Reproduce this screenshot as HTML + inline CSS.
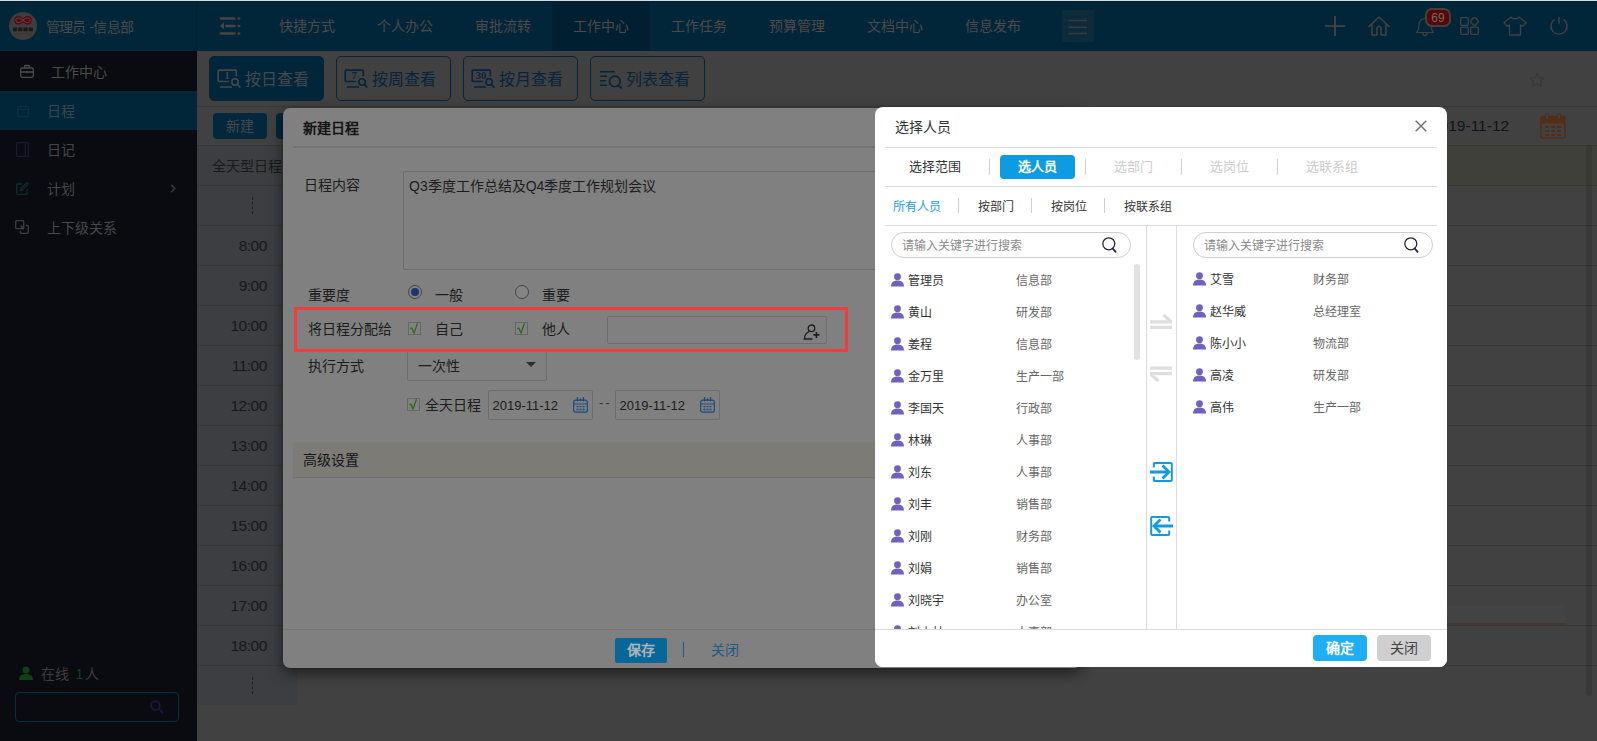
<!DOCTYPE html>
<html lang="zh-CN">
<head>
<meta charset="utf-8">
<title>新建日程 - 选择人员</title>
<style>
*{box-sizing:border-box;margin:0;padding:0}
html,body{width:1597px;height:741px;overflow:hidden;background:#414141}
body{position:relative;font-family:"Liberation Sans",sans-serif;font-size:14px;color:#1c1c1c}
.abs{position:absolute}
.t{position:absolute;white-space:nowrap;line-height:20px;height:20px}
svg{position:absolute;overflow:visible}
/* top bar */
#top{left:0;top:0;width:1597px;height:51px;background:#01263a}
#top .tab{position:absolute;top:0;height:51px;width:98px;text-align:center;line-height:52px;font-size:14px;color:#4d4a49}
#top .tab.on{background:#001f31}
/* sidebar */
#side{left:0;top:51px;width:197px;height:690px;background:#0a0b10}
#side .it{position:absolute;left:0;width:197px;height:39px;line-height:41px;font-size:14px;color:#45474b}
/* main */
#main{left:197px;top:51px;width:1400px;height:690px;background:#414141}
.vbtn{position:absolute;top:56px;width:115px;height:45px;border:1px solid #04253b;border-radius:5px;font-size:16px;color:#05253b;line-height:43px}
.vbtn span{position:absolute;left:35px;top:1px}
.vbtn.on{background:#01263a;border-color:#01263a;color:#46494c}
.hl{position:absolute;height:1px;background:#373737}
.time{position:absolute;left:197px;width:69.8px;text-align:right;font-size:15.5px;letter-spacing:-0.5px;line-height:20px;color:#181818}
/* dialog 1 */
#d1{left:283px;top:108px;width:798px;height:560px;background:#808080;border-radius:7px;box-shadow:0 5px 14px rgba(0,0,0,.55)}
.lab{position:absolute;font-size:14px;line-height:20px;white-space:nowrap;color:#1c1c1c}
.inp{position:absolute;border:1px solid #6d6d6d;border-radius:2px}
.cb{position:absolute;width:13px;height:13px;border:1px solid #666;background:#828282}
/* dialog 2 */
#d2{left:875px;top:107px;width:572px;height:560px;background:#fff;border-radius:8px;overflow:hidden}
#d2 .ln{position:absolute;left:10px;width:552px;height:1px;background:#dcdcdc}
#d2 .sep{position:absolute;width:1px;background:#cfcfcf}
#d2 .row{position:absolute;height:32px;line-height:32px;font-size:12px;white-space:nowrap}
#d2 .row .n{position:absolute;left:17px;color:#333}
#d2 .row .d{position:absolute;left:125px;color:#666}
#d2 .row svg{left:0;top:8px}
.search{position:absolute;height:26px;width:240px;border:1px solid #cfcfcf;border-radius:13px;font-size:12px;color:#8a8a8a;line-height:26px;padding-left:10px;white-space:nowrap}
</style>
</head>
<body>
<!-- MAIN BACKGROUND -->
<div id="main" class="abs"></div>
<!-- view buttons -->
<div class="vbtn on" style="left:209px"><svg width="24" height="20" viewBox="0 0 24 20" style="left:7px;top:11px" fill="none" stroke="currentColor" stroke-width="1.6"><path d="M19.3 8.3V3.1a1 1 0 0 0-1-1H2.2a1 1 0 0 0-1 1v9.4a1 1 0 0 0 1 1H12M3 19h12"/><text x="10" y="11.2" font-family="Liberation Serif,serif" font-weight="bold" font-size="10.5" text-anchor="middle" fill="currentColor" stroke="none">1</text><circle cx="18" cy="13.9" r="3.2" stroke-width="1.6"/><path d="M20.3 16.3l3.1 3.5" stroke-width="1.6"/></svg><span>按日查看</span></div>
<div class="vbtn" style="left:336px"><svg width="24" height="20" viewBox="0 0 24 20" style="left:7px;top:11px" fill="none" stroke="currentColor" stroke-width="1.6"><path d="M19.3 8.3V3.1a1 1 0 0 0-1-1H2.2a1 1 0 0 0-1 1v9.4a1 1 0 0 0 1 1H12M3 19h12"/><text x="10" y="11.2" font-family="Liberation Serif,serif" font-weight="bold" font-size="10.5" text-anchor="middle" fill="currentColor" stroke="none">7</text><circle cx="18" cy="13.9" r="3.2" stroke-width="1.6"/><path d="M20.3 16.3l3.1 3.5" stroke-width="1.6"/></svg><span>按周查看</span></div>
<div class="vbtn" style="left:463px"><svg width="24" height="20" viewBox="0 0 24 20" style="left:7px;top:11px" fill="none" stroke="currentColor" stroke-width="1.6"><path d="M19.3 8.3V3.1a1 1 0 0 0-1-1H2.2a1 1 0 0 0-1 1v9.4a1 1 0 0 0 1 1H12M3 19h12"/><text x="10" y="11.2" font-family="Liberation Serif,serif" font-weight="bold" font-size="10.5" text-anchor="middle" fill="currentColor" stroke="none">30</text><circle cx="18" cy="13.9" r="3.2" stroke-width="1.6"/><path d="M20.3 16.3l3.1 3.5" stroke-width="1.6"/></svg><span>按月查看</span></div>
<div class="vbtn" style="left:590px"><svg width="24" height="20" viewBox="0 0 24 20" style="left:7px;top:11px" fill="none" stroke="currentColor" stroke-width="1.6"><path d="M2 3.7h14.8M2 8.2h7M2 12.7h5.8M2 17.3h7"/><circle cx="16.8" cy="13.4" r="5.3" stroke-width="1.6"/><path d="M20.6 17.3l3.2 3.1" stroke-width="1.7"/></svg><span>列表查看</span></div>
<div class="hl" style="left:197px;top:106px;width:1400px;background:#393939"></div>
<div class="abs" style="left:213px;top:113px;width:54px;height:26px;border-radius:4px;background:#01283c;color:#48494b;font-size:14px;line-height:26px;text-align:center">新建</div>
<div class="abs" style="left:276px;top:113px;width:54px;height:26px;border-radius:4px;background:#01283c"></div>
<div class="t" style="left:1431px;top:116.3px;font-size:15.5px;color:#10131c">2019-11-12</div>
<!-- star -->
<svg width="16" height="16" viewBox="0 0 16 16" style="left:1529px;top:72px" fill="none" stroke="#33393d" stroke-width="1.1" stroke-linejoin="round"><path d="M8 1.3l2 4.5 4.8.5-3.6 3.2 1 4.7L8 11.8l-4.2 2.4 1-4.7L1.2 6.3 6 5.8z"/></svg>
<!-- big calendar icon -->
<svg width="26" height="26" viewBox="0 0 26 26" style="left:1540px;top:113px"><rect x="1" y="3.5" width="24" height="21.5" rx="2" fill="none" stroke="#542d15" stroke-width="1.6"/><rect x="1" y="3.5" width="24" height="7" fill="#542d15"/><rect x="5.5" y="0.5" width="3" height="6" rx="1.5" fill="#414141" stroke="#542d15" stroke-width="1"/><rect x="17.5" y="0.5" width="3" height="6" rx="1.5" fill="#414141" stroke="#542d15" stroke-width="1"/><g fill="#542d15"><rect x="5" y="13" width="4" height="2"/><rect x="11" y="13" width="4" height="2"/><rect x="17" y="13" width="4" height="2"/><rect x="5" y="17" width="4" height="2"/><rect x="11" y="17" width="4" height="2"/><rect x="17" y="17" width="4" height="2"/><rect x="5" y="21" width="4" height="2"/><rect x="11" y="21" width="4" height="2"/><rect x="17" y="21" width="4" height="2"/></g></svg>
<!-- all-day row -->
<div class="abs" style="left:197px;top:145px;width:1400px;height:41px;background:#3f403a"></div>
<div class="abs" style="left:197px;top:145px;width:100px;height:560px;background:#3c3e41"></div>
<div class="t" style="left:212px;top:156px;font-size:14px;color:#1a1a1a">全天型日程</div>
<div class="hl" style="left:197px;top:145px;width:1400px"></div>
<div class="hl" style="left:197px;top:185px;width:1400px"></div>
<div class="hl" style="left:197px;top:225px;width:1400px"></div>
<div class="hl" style="left:197px;top:265px;width:1400px"></div>
<div class="hl" style="left:197px;top:305px;width:1400px"></div>
<div class="hl" style="left:197px;top:345px;width:1400px"></div>
<div class="hl" style="left:197px;top:385px;width:1400px"></div>
<div class="hl" style="left:197px;top:425px;width:1400px"></div>
<div class="hl" style="left:197px;top:465px;width:1400px"></div>
<div class="hl" style="left:197px;top:505px;width:1400px"></div>
<div class="hl" style="left:197px;top:545px;width:1400px"></div>
<div class="hl" style="left:197px;top:585px;width:1400px"></div>
<div class="hl" style="left:197px;top:625px;width:1400px"></div>
<div class="hl" style="left:197px;top:665px;width:1400px"></div>
<div class="hl" style="left:197px;top:665px;width:1400px"></div>
<div class="time" style="top:235.5px">8:00</div>
<div class="time" style="top:275.5px">9:00</div>
<div class="time" style="top:315.5px">10:00</div>
<div class="time" style="top:355.5px">11:00</div>
<div class="time" style="top:395.5px">12:00</div>
<div class="time" style="top:435.5px">13:00</div>
<div class="time" style="top:475.5px">14:00</div>
<div class="time" style="top:515.5px">15:00</div>
<div class="time" style="top:555.5px">16:00</div>
<div class="time" style="top:595.5px">17:00</div>
<div class="time" style="top:635.5px">18:00</div>
<div class="abs" style="left:251.5px;top:197px;width:0;height:17px;border-left:1.5px dashed #26221a"></div>
<div class="abs" style="left:251.5px;top:677px;width:0;height:17px;border-left:1.5px dashed #26221a"></div>
<!-- current time line -->
<div class="abs" style="left:1081px;top:605px;width:485px;height:18px;background:#434343"></div>
<div class="abs" style="left:1081px;top:623px;width:485px;height:2.3px;background:#44392c"></div>
<!-- page scrollbar -->
<div class="abs" style="left:1586px;top:145px;width:6px;height:551px;border-radius:3px;background:rgba(0,0,0,.11)"></div>
<!-- TOPBAR -->
<div id="top" class="abs">
<!-- logo -->
<div class="abs" style="left:9px;top:12px;width:28px;height:28px;border-radius:14px;background:#3f3d3c;overflow:hidden">
<svg width="28" height="28" viewBox="0 0 28 28" style="left:0;top:0"><path d="M14 6.2c-1.7-1.6-3.5-2.2-5-2.2-2.5 0-3.8 1.9-3.8 4.3s1.3 4.3 3.8 4.3c1.5 0 3.3-.6 5-2.2 1.7 1.6 3.5 2.2 5 2.2 2.5 0 3.8-1.9 3.8-4.3S21.5 4 19 4c-1.5 0-3.3.6-5 2.2z" fill="#5a0911"/><path d="M14 8.3c-1.5-1.6-3-2.3-4.6-2.3-1.6 0-2.5 1-2.5 2.3s.9 2.3 2.5 2.3c1.6 0 3.1-.7 4.6-2.3zm0 0c1.5-1.6 3-2.3 4.6-2.3 1.6 0 2.5 1 2.5 2.3s-.9 2.3-2.5 2.3c-1.6 0-3.1-.7-4.6-2.3z" fill="none" stroke="#57504e" stroke-width="1"/><path d="M4 15.5h4.2v3.8H4zM9.2 15.5h4.2v3.8H9.2zM14.5 15.5h4.2v3.8h-4.2zM19.7 15.5h4.2v3.8h-4.2z" fill="#1d1919"/><rect x="4.5" y="21.3" width="19" height=".9" fill="#393737"/></svg>
</div>
<div class="t" style="left:45.7px;top:17px;font-size:14px;color:#4a4a4b;letter-spacing:-0.6px">管理员 -信息部</div>
<div class="abs" style="left:196px;top:2px;width:1px;height:49px;background:#01202f"></div>
<!-- collapse icon -->
<svg width="24" height="20" viewBox="0 0 24 20" style="left:218px;top:16px" fill="none" stroke="#484442" stroke-width="2.5" stroke-linecap="round"><path d="M2.8 2.4h13.7M8.3 10h8.2M2.8 17.5h13.7"/><path d="M20.7 2.4h.5M20.7 10h.5M20.7 17.5h.5"/><path d="M6 6.6L1.7 10 6 13.3z" fill="#484442" stroke="none"/></svg>
<div class="tab" style="left:258px">快捷方式</div>
<div class="tab" style="left:356px">个人办公</div>
<div class="tab" style="left:454px">审批流转</div>
<div class="tab on" style="left:552px">工作中心</div>
<div class="tab" style="left:650px">工作任务</div>
<div class="tab" style="left:748px">预算管理</div>
<div class="tab" style="left:846px">文档中心</div>
<div class="tab" style="left:944px">信息发布</div>
<!-- more box -->
<div class="abs" style="left:1062px;top:10px;width:32px;height:32px;background:#0d2c3b"></div>
<svg width="20" height="16" viewBox="0 0 20 16" style="left:1068px;top:18.7px" stroke="#3b3a39" stroke-width="1.5" fill="none"><path d="M.7 1.5h18.3M.7 8.3h18.3M.7 14.6h18.3"/></svg>
<!-- plus -->
<svg width="20" height="20" viewBox="0 0 20 20" style="left:1325px;top:16px" stroke="#4d4744" stroke-width="1.7" fill="none"><path d="M10 0v20M0 10h20"/></svg>
<!-- home -->
<svg width="22" height="20" viewBox="0 0 22 20" style="left:1368px;top:15.7px" stroke="#454341" stroke-width="1.5" fill="none" stroke-linejoin="round" stroke-linecap="round"><path d="M1 10.5L11 1l10 9.5M4 8.5v10.5h5v-6.5a2 2 0 0 1 4 0v6.5h5V8.5"/></svg>
<!-- bell -->
<svg width="20" height="22" viewBox="0 0 20 22" style="left:1415px;top:15px" stroke="#40403f" stroke-width="1.2" fill="none" stroke-linejoin="round" stroke-linecap="round"><path d="M1.5 17.5c2-2 2.5-4 2.5-8a6 6 0 0 1 12 0c0 4 .5 6 2.5 8zM8 18.5a2 2 0 0 0 4 0"/></svg>
<div class="abs" style="left:1425px;top:8px;width:26px;height:19px;border:2px solid #44403e;border-radius:7px;background:#58060a;color:#75695f;font-size:12px;line-height:16px;text-align:center">69</div>
<!-- grid -->
<svg width="20" height="18" viewBox="0 0 20 18" style="left:1460px;top:17px" stroke="#424242" stroke-width="1.3" fill="none" stroke-linejoin="round"><rect x=".7" y=".7" width="7.6" height="7.6" rx="1"/><rect x=".7" y="10.2" width="7.6" height="7.1" rx="1"/><rect x="10.7" y="10.2" width="7.6" height="7.1" rx="1"/><rect x="11.3" y="1.3" width="6.4" height="6.4" rx="1.8" transform="rotate(45 14.5 4.5)"/></svg>
<!-- shirt -->
<svg width="24" height="20" viewBox="0 0 24 20" style="left:1502.5px;top:16px" stroke="#434240" stroke-width="1.3" fill="none" stroke-linejoin="round"><path d="M8 1L1 6.5l3.2 3.8L6.5 9v10h11V9l2.3 1.3L23 6.5 16 1c-.8 2.3-7.2 2.3-8 0z"/></svg>
<!-- power -->
<svg width="20" height="18" viewBox="0 0 20 18" style="left:1549px;top:17px" stroke="#434240" stroke-width="1.4" fill="none" stroke-linecap="butt"><path d="M10 0v6.8M5.5 2.3a8.1 8.1 0 1 0 9 0"/></svg>
<div class="abs" style="left:0;top:0;width:1597px;height:1px;background:#d9dcde"></div><div class="abs" style="left:0;top:1px;width:1597px;height:1px;background:#001b2c"></div>
</div>
<!-- SIDEBAR -->
<div id="side" class="abs">
<div class="it" style="top:0;height:40px;line-height:42px;color:#4a4b4d"><span class="abs" style="left:51px">工作中心</span>
<svg width="14" height="13" viewBox="0 0 14 13" style="left:20px;top:14px" fill="none" stroke="#4a4b4d" stroke-width="1.3"><rect x=".7" y="3" width="12.6" height="9.3" rx="1.5"/><path d="M4.5 3V1.5a1 1 0 0 1 1-1h3a1 1 0 0 1 1 1V3M.7 7h12.6M7 6v2"/></svg></div>
<div class="it" style="top:40px;background:#01263a;color:#3b434b"><span class="abs" style="left:47px">日程</span>
<svg width="12" height="12" viewBox="0 0 12 12" style="left:17px;top:14px" fill="none" stroke="#0c2f44" stroke-width="1.2"><rect x=".6" y="1.5" width="10.8" height="10" rx="1"/><path d="M.6 4.5h10.8M3.5 0v3M8.5 0v3"/></svg></div>
<div class="it" style="top:79px"><span class="abs" style="left:47px">日记</span>
<svg width="13" height="15" viewBox="0 0 13 15" style="left:16px;top:12px" fill="none" stroke="#191934" stroke-width="1.2"><rect x=".6" y=".6" width="11.8" height="13.8" rx="1"/><path d="M9.3.6v13.8"/></svg></div>
<div class="it" style="top:118px"><span class="abs" style="left:47px">计划</span>
<svg width="13" height="13" viewBox="0 0 13 13" style="left:16px;top:13px" fill="none" stroke="#0b2c33" stroke-width="1.3"><path d="M11 7v4.3a1 1 0 0 1-1 1H1.7a1 1 0 0 1-1-1V3a1 1 0 0 1 1-1H6M4.5 8.5l1.8-.4 6-6-1.4-1.4-6 6z"/></svg>
<svg width="6" height="9" viewBox="0 0 6 9" style="left:170px;top:15px" fill="none" stroke="#3c3e42" stroke-width="1.4"><path d="M1 .7l3.8 3.8L1 8.3"/></svg></div>
<div class="it" style="top:157px"><span class="abs" style="left:47px">上下级关系</span>
<svg width="14" height="14" viewBox="0 0 14 14" style="left:15px;top:12px" fill="none" stroke="#3c3e42" stroke-width="1.3"><rect x=".7" y=".7" width="8" height="8" rx="1"/><path d="M11 5.3h1.3a1 1 0 0 1 1 1v6a1 1 0 0 1-1 1h-6a1 1 0 0 1-1-1V11M5.5 5.5l3 3M8.5 6v2.5H6"/></svg></div>
<!-- online -->
<svg width="14" height="14" viewBox="0 0 14 14" style="left:19px;top:615px" fill="#0d4212"><circle cx="7" cy="4" r="3.5"/><path d="M0 14c0-4 2.5-6 7-6s7 2 7 6z"/></svg>
<div class="t" style="left:41px;top:613px;font-size:14px;color:#3b3d40">在线 <span style="color:#0d4212;margin-left:2.5px;margin-right:1.5px">1</span>人</div>
<div class="abs" style="left:15px;top:641px;width:164px;height:30px;border:1px solid #082e42;border-radius:4px"></div>
<svg width="14" height="14" viewBox="0 0 14 14" style="left:150px;top:649px" fill="none" stroke="#1b163a" stroke-width="1.8"><circle cx="5.5" cy="5.5" r="4.3"/><path d="M8.7 8.7l4.3 4.3"/></svg>
</div>
<!-- DIALOG1 -->
<div id="d1" class="abs">
<div class="lab" style="left:20px;top:9.5px;font-weight:bold;color:#141414">新建日程</div>
<div class="abs" style="left:10px;top:38px;width:788px;height:2px;background:#737373"></div>
<div class="lab" style="left:21px;top:66.5px">日程内容</div>
<div class="inp" style="left:120px;top:63px;width:560px;height:99px"></div>
<div class="lab" style="left:126px;top:67.5px">Q3季度工作总结及Q4季度工作规划会议</div>
<div class="lab" style="left:25px;top:177px">重要度</div>
<div class="abs" style="left:125px;top:177px;width:14px;height:14px;border-radius:7px;border:1px solid #454545;background:#848484"></div>
<div class="abs" style="left:128px;top:180px;width:8px;height:8px;border-radius:4px;background:#1c3475"></div>
<div class="lab" style="left:152px;top:177px">一般</div>
<div class="abs" style="left:232px;top:177px;width:14px;height:14px;border-radius:7px;border:1px solid #454545;background:#848484"></div>
<div class="lab" style="left:259px;top:177px">重要</div>
<div class="lab" style="left:25px;top:210.5px">将日程分配给</div>
<div class="cb" style="left:125px;top:214px"><svg width="11" height="11" viewBox="0 0 11 11" style="left:0;top:0" fill="none" stroke="#2c6a12" stroke-width="1.3"><path d="M1.3 5.6l1.5-.5 2.2 5L8.5.3"/></svg></div>
<div class="lab" style="left:152px;top:210.5px">自己</div>
<div class="cb" style="left:232px;top:214px"><svg width="11" height="11" viewBox="0 0 11 11" style="left:0;top:0" fill="none" stroke="#2c6a12" stroke-width="1.3"><path d="M1.3 5.6l1.5-.5 2.2 5L8.5.3"/></svg></div>
<div class="lab" style="left:259px;top:210.5px">他人</div>
<div class="inp" style="left:324px;top:208px;width:220px;height:28px"></div>
<svg width="17" height="17" viewBox="0 0 17 17" style="left:520px;top:214.5px" fill="none" stroke="#1c1c1c" stroke-width="1.3"><circle cx="8.5" cy="5.3" r="3.3"/><path d="M9.5 16H1.3c.3-3.6 2-6.2 4.7-7.4"/><path d="M10.4 11.9h6M13.4 8.9v6" stroke-width="1.6"/></svg>
<div class="lab" style="left:25px;top:247.5px">执行方式</div>
<div class="inp" style="left:124px;top:243px;width:140px;height:30px"></div>
<div class="lab" style="left:135px;top:247.5px">一次性</div>
<div class="abs" style="left:243px;top:254px;width:0;height:0;border:5px solid transparent;border-top:5.5px solid #2c2c2c;border-bottom:0"></div>
<div class="cb" style="left:124px;top:290px"><svg width="11" height="11" viewBox="0 0 11 11" style="left:0;top:0" fill="none" stroke="#2c6a12" stroke-width="1.3"><path d="M1.3 5.6l1.5-.5 2.2 5L8.5.3"/></svg></div>
<div class="lab" style="left:142px;top:287px">全天日程</div>
<div class="inp" style="left:205px;top:282px;width:105px;height:30px"></div>
<div class="lab" style="left:209.5px;top:288px;font-size:13px">2019-11-12</div>
<svg width="15" height="16" viewBox="0 0 15 16" fill="none" stroke="#1b4a7c" stroke-width="1.2" style="left:290px;top:289px"><rect x=".7" y="3.2" width="13.6" height="12" rx="2"/><path d="M.7 7h13.6M4.5 0v4.5M10.5 0v4.5M7.5 1.2v3" /><path d="M3.5 9.7h2M6.5 9.7h2M9.5 9.7h2M3.5 12.5h2M6.5 12.5h2M9.5 12.5h2" stroke-width="1.3"/></svg>
<div class="lab" style="left:316px;top:284.5px;font-size:13px;letter-spacing:2px;color:#333">--</div>
<div class="inp" style="left:332px;top:282px;width:105px;height:30px"></div>
<div class="lab" style="left:336.5px;top:288px;font-size:13px">2019-11-12</div>
<svg width="15" height="16" viewBox="0 0 15 16" fill="none" stroke="#1b4a7c" stroke-width="1.2" style="left:417px;top:289px"><rect x=".7" y="3.2" width="13.6" height="12" rx="2"/><path d="M.7 7h13.6M4.5 0v4.5M10.5 0v4.5M7.5 1.2v3" /><path d="M3.5 9.7h2M6.5 9.7h2M9.5 9.7h2M3.5 12.5h2M6.5 12.5h2M9.5 12.5h2" stroke-width="1.3"/></svg>
<div class="abs" style="left:10px;top:334px;width:788px;height:36px;background:#7c7b76;border-bottom:1px solid #717171"></div>
<div class="lab" style="left:19.5px;top:342px;color:#141414">高级设置</div>
<div class="abs" style="left:0;top:521px;width:798px;height:1px;background:#747474"></div>
<div class="abs" style="left:332px;top:530px;width:52px;height:25px;border-radius:2px;background:#086799;color:#aab5bb;font-weight:bold;font-size:14px;line-height:25px;text-align:center">保存</div>
<div class="abs" style="left:400px;top:534px;width:1px;height:15px;background:#1e5a85"></div>
<div class="lab" style="left:427.5px;top:532px;color:#1e5a85">关闭</div>
</div>
<!-- REDBOX -->
<div class="abs" style="left:294px;top:307px;width:554px;height:45px;border:3px solid #f53b3b"></div>
<!-- DIALOG2 -->
<div id="d2" class="abs">
<div class="lab" style="left:19.5px;top:10px;font-size:14px;color:#333">选择人员</div>
<svg width="12" height="12" viewBox="0 0 12 12" style="left:540px;top:13px" stroke="#6f6f6f" stroke-width="1.4" fill="none"><path d="M.7.7l10.6 10.6M11.3.7L.7 11.3"/></svg>
<div class="ln" style="top:40px"></div>
<div class="lab" style="left:34px;top:50px;font-size:13px;color:#333">选择范围</div>
<div class="sep" style="left:113.5px;top:52px;height:16px"></div>
<div class="abs" style="left:125px;top:48px;width:75px;height:24px;border-radius:4px;background:#0d9be2;color:#fff;font-size:13px;font-weight:bold;line-height:24px;text-align:center">选人员</div>
<div class="sep" style="left:209.5px;top:52px;height:16px"></div>
<div class="lab" style="left:239px;top:50px;font-size:13px;color:#ccc">选部门</div>
<div class="sep" style="left:305.5px;top:52px;height:16px"></div>
<div class="lab" style="left:335px;top:50px;font-size:13px;color:#ccc">选岗位</div>
<div class="sep" style="left:401.5px;top:52px;height:16px"></div>
<div class="lab" style="left:431px;top:50px;font-size:13px;color:#ccc">选联系组</div>
<div class="ln" style="top:79px"></div>
<div class="lab" style="left:17.5px;top:89.5px;font-size:12px;color:#1a9be0">所有人员</div>
<div class="sep" style="left:82.5px;top:91px;height:15px"></div>
<div class="lab" style="left:103px;top:89.5px;font-size:12px;color:#333">按部门</div>
<div class="sep" style="left:155.5px;top:91px;height:15px"></div>
<div class="lab" style="left:176px;top:89.5px;font-size:12px;color:#333">按岗位</div>
<div class="sep" style="left:228.5px;top:91px;height:15px"></div>
<div class="lab" style="left:249px;top:89.5px;font-size:12px;color:#333">按联系组</div>
<div class="ln" style="top:118px"></div>
<div class="sep" style="left:271px;top:119px;height:404px;background:#dcdcdc"></div>
<div class="sep" style="left:301px;top:119px;height:404px;background:#dcdcdc"></div>
<div class="search" style="left:16px;top:125px">请输入关键字进行搜索</div>
<svg width="15" height="16" viewBox="0 0 15 16" style="left:226.6px;top:130px" fill="none" stroke="#25283a" stroke-width="1.3"><circle cx="6.8" cy="6.8" r="6"/><path d="M10.8 11.6l2.8 3.2" stroke-width="1.8" stroke-linecap="round"/></svg>
<div class="search" style="left:318px;top:125px">请输入关键字进行搜索</div>
<svg width="15" height="16" viewBox="0 0 15 16" style="left:528.6px;top:130px" fill="none" stroke="#25283a" stroke-width="1.3"><circle cx="6.8" cy="6.8" r="6"/><path d="M10.8 11.6l2.8 3.2" stroke-width="1.8" stroke-linecap="round"/></svg>
<div class="abs" style="left:259px;top:157px;width:6px;height:96px;border-radius:3px;background:#e1e1e1"></div>
<div class="row" style="left:16px;top:157.5px;width:240px"><svg width="13" height="14" viewBox="0 0 13 14" fill="#7062ba"><circle cx="6.5" cy="3.7" r="3.4"/><path d="M0 13.5c0-4 2.5-6 6.5-6s6.5 2 6.5 6z"/></svg><span class="n">管理员</span><span class="d">信息部</span></div>
<div class="row" style="left:16px;top:189.5px;width:240px"><svg width="13" height="14" viewBox="0 0 13 14" fill="#7062ba"><circle cx="6.5" cy="3.7" r="3.4"/><path d="M0 13.5c0-4 2.5-6 6.5-6s6.5 2 6.5 6z"/></svg><span class="n">黄山</span><span class="d">研发部</span></div>
<div class="row" style="left:16px;top:221.5px;width:240px"><svg width="13" height="14" viewBox="0 0 13 14" fill="#7062ba"><circle cx="6.5" cy="3.7" r="3.4"/><path d="M0 13.5c0-4 2.5-6 6.5-6s6.5 2 6.5 6z"/></svg><span class="n">姜程</span><span class="d">信息部</span></div>
<div class="row" style="left:16px;top:253.5px;width:240px"><svg width="13" height="14" viewBox="0 0 13 14" fill="#7062ba"><circle cx="6.5" cy="3.7" r="3.4"/><path d="M0 13.5c0-4 2.5-6 6.5-6s6.5 2 6.5 6z"/></svg><span class="n">金万里</span><span class="d">生产一部</span></div>
<div class="row" style="left:16px;top:285.5px;width:240px"><svg width="13" height="14" viewBox="0 0 13 14" fill="#7062ba"><circle cx="6.5" cy="3.7" r="3.4"/><path d="M0 13.5c0-4 2.5-6 6.5-6s6.5 2 6.5 6z"/></svg><span class="n">李国天</span><span class="d">行政部</span></div>
<div class="row" style="left:16px;top:317.5px;width:240px"><svg width="13" height="14" viewBox="0 0 13 14" fill="#7062ba"><circle cx="6.5" cy="3.7" r="3.4"/><path d="M0 13.5c0-4 2.5-6 6.5-6s6.5 2 6.5 6z"/></svg><span class="n">林琳</span><span class="d">人事部</span></div>
<div class="row" style="left:16px;top:349.5px;width:240px"><svg width="13" height="14" viewBox="0 0 13 14" fill="#7062ba"><circle cx="6.5" cy="3.7" r="3.4"/><path d="M0 13.5c0-4 2.5-6 6.5-6s6.5 2 6.5 6z"/></svg><span class="n">刘东</span><span class="d">人事部</span></div>
<div class="row" style="left:16px;top:381.5px;width:240px"><svg width="13" height="14" viewBox="0 0 13 14" fill="#7062ba"><circle cx="6.5" cy="3.7" r="3.4"/><path d="M0 13.5c0-4 2.5-6 6.5-6s6.5 2 6.5 6z"/></svg><span class="n">刘丰</span><span class="d">销售部</span></div>
<div class="row" style="left:16px;top:413.5px;width:240px"><svg width="13" height="14" viewBox="0 0 13 14" fill="#7062ba"><circle cx="6.5" cy="3.7" r="3.4"/><path d="M0 13.5c0-4 2.5-6 6.5-6s6.5 2 6.5 6z"/></svg><span class="n">刘刚</span><span class="d">财务部</span></div>
<div class="row" style="left:16px;top:445.5px;width:240px"><svg width="13" height="14" viewBox="0 0 13 14" fill="#7062ba"><circle cx="6.5" cy="3.7" r="3.4"/><path d="M0 13.5c0-4 2.5-6 6.5-6s6.5 2 6.5 6z"/></svg><span class="n">刘娟</span><span class="d">销售部</span></div>
<div class="row" style="left:16px;top:477.5px;width:240px"><svg width="13" height="14" viewBox="0 0 13 14" fill="#7062ba"><circle cx="6.5" cy="3.7" r="3.4"/><path d="M0 13.5c0-4 2.5-6 6.5-6s6.5 2 6.5 6z"/></svg><span class="n">刘晓宇</span><span class="d">办公室</span></div>
<div class="row" style="left:16px;top:509.5px;width:240px"><svg width="13" height="14" viewBox="0 0 13 14" fill="#7062ba"><circle cx="6.5" cy="3.7" r="3.4"/><path d="M0 13.5c0-4 2.5-6 6.5-6s6.5 2 6.5 6z"/></svg><span class="n">刘小林</span><span class="d">人事部</span></div>
<div class="row" style="left:318px;top:157px;width:240px"><svg width="13" height="14" viewBox="0 0 13 14" fill="#7062ba"><circle cx="6.5" cy="3.7" r="3.4"/><path d="M0 13.5c0-4 2.5-6 6.5-6s6.5 2 6.5 6z"/></svg><span class="n">艾雪</span><span class="d" style="left:119.5px">财务部</span></div>
<div class="row" style="left:318px;top:189px;width:240px"><svg width="13" height="14" viewBox="0 0 13 14" fill="#7062ba"><circle cx="6.5" cy="3.7" r="3.4"/><path d="M0 13.5c0-4 2.5-6 6.5-6s6.5 2 6.5 6z"/></svg><span class="n">赵华威</span><span class="d" style="left:119.5px">总经理室</span></div>
<div class="row" style="left:318px;top:221px;width:240px"><svg width="13" height="14" viewBox="0 0 13 14" fill="#7062ba"><circle cx="6.5" cy="3.7" r="3.4"/><path d="M0 13.5c0-4 2.5-6 6.5-6s6.5 2 6.5 6z"/></svg><span class="n">陈小小</span><span class="d" style="left:119.5px">物流部</span></div>
<div class="row" style="left:318px;top:253px;width:240px"><svg width="13" height="14" viewBox="0 0 13 14" fill="#7062ba"><circle cx="6.5" cy="3.7" r="3.4"/><path d="M0 13.5c0-4 2.5-6 6.5-6s6.5 2 6.5 6z"/></svg><span class="n">高凌</span><span class="d" style="left:119.5px">研发部</span></div>
<div class="row" style="left:318px;top:285px;width:240px"><svg width="13" height="14" viewBox="0 0 13 14" fill="#7062ba"><circle cx="6.5" cy="3.7" r="3.4"/><path d="M0 13.5c0-4 2.5-6 6.5-6s6.5 2 6.5 6z"/></svg><span class="n">高伟</span><span class="d" style="left:119.5px">生产一部</span></div>
<!-- transfer icons -->
<svg width="24" height="16" viewBox="0 0 24 16" style="left:274px;top:207px" fill="none" stroke="#dedede" stroke-width="3.2"><path d="M1 7.8h22M1 13.3h22"/><path d="M14.5 1l8 7" stroke-width="3"/></svg>
<svg width="24" height="16" viewBox="0 0 24 16" style="left:274px;top:259px" fill="none" stroke="#dedede" stroke-width="3.2"><path d="M1 2.2h22M1 7.7h22"/><path d="M1.5 8l8 7" stroke-width="3"/></svg>
<svg width="24" height="22" viewBox="0 0 24 22" style="left:274px;top:354px" fill="none" stroke="#109be1"><path d="M4.8 6.5V3a1 1 0 0 1 1-1h16a1 1 0 0 1 1 1v16a1 1 0 0 1-1 1h-16a1 1 0 0 1-1-1v-3.5" stroke-width="2"/><path d="M1 11h18" stroke-width="3"/><path d="M13.5 4.5l6.5 6.5-6.5 6.5" stroke-width="2.8"/></svg>
<svg width="24" height="22" viewBox="0 0 24 22" style="left:275px;top:408px" fill="none" stroke="#109be1"><path d="M19.2 6.5V3a1 1 0 0 0-1-1h-16a1 1 0 0 0-1 1v16a1 1 0 0 0 1 1h16a1 1 0 0 0 1-1v-3.5" stroke-width="2"/><path d="M23 11H5" stroke-width="3"/><path d="M10.5 4.5L4 11l6.5 6.5" stroke-width="2.8"/></svg>
<!-- footer -->
<div class="abs" style="left:0;top:522px;width:572px;height:38px;background:#fff"></div>
<div class="abs" style="left:0;top:522px;width:572px;height:1px;background:#dcdcdc"></div>
<div class="abs" style="left:438px;top:528px;width:54px;height:26px;border-radius:4px;background:#1eaef6;color:#fff;font-size:14px;font-weight:bold;line-height:26px;text-align:center">确定</div>
<div class="abs" style="left:502px;top:528px;width:54px;height:26px;border-radius:4px;background:#cfcfcf;color:#444;font-size:14px;line-height:26px;text-align:center">关闭</div>
</div>
</body>
</html>
